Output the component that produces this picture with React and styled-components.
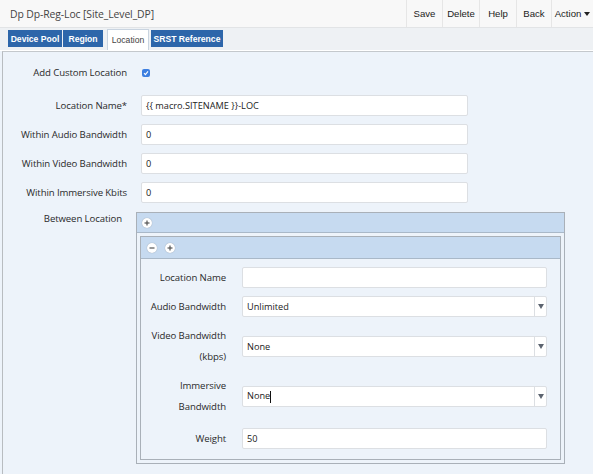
import React from "react";
import styled, { createGlobalStyle } from "styled-components";

const GlobalStyle = createGlobalStyle`
  html, body {
    margin: 0;
    padding: 0;
    background: #edf3fa;
  }
  body {
    font-family: "Open Sans", "DejaVu Sans", sans-serif;
    color: #333;
  }
`;

const Page = styled.div`
  width: 593px;
  height: 474px;
  overflow: hidden;
  background: #edf3fa;
`;

const Header = styled.div`
  display: flex;
  align-items: stretch;
  justify-content: space-between;
  height: 27px;
  background: #f8f8f8;
  border-bottom: 1px solid #e2e4e6;
`;

const Title = styled.div`
  display: flex;
  align-items: center;
  padding-left: 10px;
  font-size: 10.4px;
  letter-spacing: -0.1px;
  color: #444;
`;

const Actions = styled.div`
  display: flex;
  align-items: stretch;
`;

const ActionButton = styled.div`
  display: flex;
  align-items: center;
  justify-content: center;
  width: ${({ w }) => w}px;
  border-left: 1px solid #e6e6e6;
  font-family: "Liberation Sans", Arial, sans-serif;
  font-size: 9.6px;
  color: #222;
  gap: 3px;
`;

const TabBar = styled.div`
  display: flex;
  align-items: flex-end;
  height: 22px;
  padding-left: 8px;
  background: #eef1f4;
  border-bottom: 1px solid #fff;
`;

const Tab = styled.div`
  display: flex;
  align-items: center;
  justify-content: center;
  box-sizing: border-box;
  width: ${({ w }) => w}px;
  height: ${({ active }) => (active ? 21 : 17)}px;
  margin-bottom: ${({ active }) => (active ? 0 : 3)}px;
  margin-right: ${({ mr }) => mr}px;
  background: ${({ active }) => (active ? "#fff" : "#2d66aa")};
  border: ${({ active }) => (active ? "1px solid #c9d4e0" : "none")};
  border-bottom: none;
  color: ${({ active }) => (active ? "#444" : "#fff")};
  font-family: "Liberation Sans", Arial, sans-serif;
  font-size: 8.6px;
  font-weight: ${({ active }) => (active ? "normal" : "bold")};
`;

const Content = styled.div`
  margin-left: 2px;
  border-left: 1px solid #b8bcc0;
  border-top: 1px solid #c4c8cc;
  padding-top: 13px;
  height: 420px;
  background: #edf3fa;
`;

const FormGrid = styled.div`
  display: grid;
  grid-template-columns: ${({ labelWidth }) => labelWidth}px ${({ fieldWidth }) => fieldWidth}px;
  column-gap: ${({ colGap }) => colGap}px;
  row-gap: 8px;
  align-items: center;
`;

const Label = styled.div`
  text-align: right;
  font-size: 9.6px;
  letter-spacing: -0.1px;
  line-height: ${({ lh }) => lh || 16}px;
  color: #2a2a2a;
`;

const Input = styled.div`
  display: flex;
  align-items: center;
  box-sizing: border-box;
  height: 21px;
  padding-left: 4px;
  background: #fff;
  border: 1px solid #dcdfe3;
  border-radius: 2px;
  font-size: 9.2px;
  color: #222;
`;

const Caret = styled.span`
  display: inline-block;
  width: 1px;
  height: 12px;
  background: #111;
  vertical-align: middle;
`;

const SelectBox = styled(Input)`
  justify-content: space-between;
  padding-right: 0;
`;

const SelectArrow = styled.div`
  display: flex;
  align-items: center;
  justify-content: center;
  width: 11px;
  height: 100%;
  border-left: 1px solid #dcdfe3;
`;

const Check = styled.div`
  width: 8px;
  height: 8px;
  border-radius: 2px;
  background: #3d7fe0;
  display: flex;
  align-items: center;
  justify-content: center;
`;

const CheckCell = styled.div`
  height: 16px;
  display: flex;
  align-items: center;
  margin-left: 1px;
`;

const BetweenRow = styled.div`
  display: flex;
  align-items: flex-start;
  gap: 9px;
  margin-top: 9px;
`;

const BetweenLabel = styled(Label)`
  width: 119px;
  padding-right: 5px;
  margin-top: -1px;
`;

const Panel = styled.div`
  box-sizing: border-box;
  width: ${({ w }) => w}px;
  border: 1px solid #a9b0b8;
  background: #edf3fa;
`;

const PanelHead = styled.div`
  display: flex;
  align-items: center;
  gap: 8px;
  height: ${({ h }) => h}px;
  padding-left: ${({ pl }) => pl}px;
  background: #c6daf0;
  border-bottom: 1px solid #a9b8c8;
`;

const RoundBtn = styled.div`
  width: 10px;
  height: 10px;
  border-radius: 50%;
  background: #fff;
  box-shadow: 0 0 1px rgba(0, 0, 0, 0.35);
  display: flex;
  align-items: center;
  justify-content: center;
`;

const InnerWrap = styled.div`
  padding: 3px;
`;

const InnerBody = styled.div`
  padding: 8px 13px 10px 0;
`;

const SpacedLabel = styled(Label)`
  margin-top: ${({ mt }) => mt || 0}px;
`;

const SpacedInput = styled(Input)`
  margin-top: ${({ mt }) => mt || 0}px;
`;

const Icon = ({ kind }) => (
  <svg width="6" height="6" viewBox="0 0 6 6">
    <rect x="0.5" y="2.4" width="5" height="1.2" fill="#555" />
    {kind === "plus" && <rect x="2.4" y="0.5" width="1.2" height="5" fill="#555" />}
  </svg>
);

const Select = ({ children }) => (
  <SelectBox>
    <span>{children}</span>
    <SelectArrow>
      <svg width="6" height="5" viewBox="0 0 6 5">
        <path d="M0 0 L6 0 L3 5 Z" fill="#5c6470" />
      </svg>
    </SelectArrow>
  </SelectBox>
);

export default function App() {
  return (
    <Page>
      <GlobalStyle />
      <Header>
        <Title>Dp Dp-Reg-Loc [Site_Level_DP]</Title>
        <Actions>
          <ActionButton w={35}>Save</ActionButton>
          <ActionButton w={36}>Delete</ActionButton>
          <ActionButton w={36}>Help</ActionButton>
          <ActionButton w={34}>Back</ActionButton>
          <ActionButton w={41}>
            Action
            <svg width="6" height="4" viewBox="0 0 6 4">
              <path d="M0 0 L6 0 L3 4 Z" fill="#222" />
            </svg>
          </ActionButton>
        </Actions>
      </Header>
      <TabBar>
        <Tab w={54} mr={1}>Device Pool</Tab>
        <Tab w={40} mr={4}>Region</Tab>
        <Tab active w={42} mr={2}>Location</Tab>
        <Tab w={72} mr={0}>SRST Reference</Tab>
      </TabBar>
      <Content>
        <FormGrid labelWidth={124} fieldWidth={327} colGap={14}>
          <Label>Add Custom Location</Label>
          <CheckCell>
            <Check>
              <svg width="6" height="6" viewBox="0 0 6 6">
                <path d="M1 3.2 L2.4 4.6 L5 1.4" stroke="#fff" strokeWidth="1.1" fill="none" />
              </svg>
            </Check>
          </CheckCell>
          <SpacedLabel mt={6}>Location Name*</SpacedLabel>
          <SpacedInput mt={6}>{"{{ macro.SITENAME }}-LOC"}</SpacedInput>
          <Label>Within Audio Bandwidth</Label>
          <Input>0</Input>
          <Label>Within Video Bandwidth</Label>
          <Input>0</Input>
          <Label>Within Immersive Kbits</Label>
          <Input>0</Input>
        </FormGrid>
        <BetweenRow>
          <BetweenLabel>Between Location</BetweenLabel>
          <Panel w={429}>
            <PanelHead h={19} pl={5}>
              <RoundBtn>
                <Icon kind="plus" />
              </RoundBtn>
            </PanelHead>
            <InnerWrap>
              <Panel w={421}>
                <PanelHead h={21} pl={6}>
                  <RoundBtn>
                    <Icon kind="minus" />
                  </RoundBtn>
                  <RoundBtn>
                    <Icon kind="plus" />
                  </RoundBtn>
                </PanelHead>
                <InnerBody>
                  <FormGrid labelWidth={85} fieldWidth={305} colGap={16}>
                    <Label lh={21}>Location Name</Label>
                    <Input />
                    <Label lh={21}>Audio Bandwidth</Label>
                    <Select>Unlimited</Select>
                    <Label lh={21}>Video Bandwidth (kbps)</Label>
                    <Select>None</Select>
                    <Label lh={21}>Immersive Bandwidth</Label>
                    <Select>
                      None
                      <Caret />
                    </Select>
                    <SpacedLabel lh={21} mt={3}>Weight</SpacedLabel>
                    <SpacedInput mt={3}>50</SpacedInput>
                  </FormGrid>
                </InnerBody>
              </Panel>
            </InnerWrap>
          </Panel>
        </BetweenRow>
      </Content>
    </Page>
  );
}
